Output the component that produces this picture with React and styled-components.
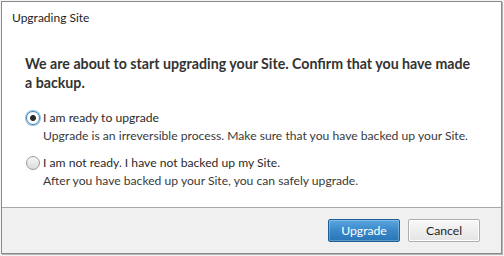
import styled, { createGlobalStyle } from "styled-components";

const GlobalStyle = createGlobalStyle`
  html, body {
    margin: 0;
    padding: 0;
    background: #f4f4f4;
  }
  * {
    box-sizing: border-box;
  }
`;

const Page = styled.div`
  width: 504px;
  height: 256px;
  padding: 1px 2px 2px 1px;
  background: #f4f4f4;
  font-family: Lato, "Noto Sans", sans-serif;
`;

const Dialog = styled.div`
  height: 100%;
  display: flex;
  flex-direction: column;
  background: #fff;
  border: 1px solid #8a8a8a;
  box-shadow: 1px 1px 0 #b5b5b5;
`;

const TitleBar = styled.div`
  height: 33px;
  padding: 8px 0 0 10px;
  font-size: 12px;
  color: #1e1e1e;
`;

const Content = styled.div`
  flex: 1;
  padding: 19px 24px 0 23px;
`;

const Heading = styled.h2`
  margin: 0 0 17px;
  font-size: 14.2px;
  line-height: 19px;
  font-weight: 700;
  color: #333;
`;

const Option = styled.label`
  display: grid;
  grid-template-columns: 17px 1fr;
  column-gap: 1px;
  margin-bottom: ${(p) => (p.$last ? "0" : "9px")};
  font-size: 12.15px;
  line-height: 18px;
  color: #2a2a2a;
`;

const Radio = styled.span`
  width: 14px;
  height: 14px;
  margin-top: 2px;
  margin-left: 1px;
  border-radius: 50%;
  border: 1px solid ${(p) => (p.$checked ? "#3c7fb1" : "#9a9a9a")};
  background: ${(p) =>
    p.$checked
      ? "radial-gradient(circle, #222 0, #333 2.6px, #fff 3.4px, #fff 100%)"
      : "linear-gradient(#f6f6f6, #dcdcdc)"};
  box-shadow: ${(p) => (p.$checked ? "0 0 0 1px #8fc0e6" : "none")};
`;

const Desc = styled.span`
  grid-column: 2;
  color: #3a3a3a;
`;

const Footer = styled.div`
  height: 46px;
  display: flex;
  justify-content: flex-end;
  align-items: center;
  gap: 8px;
  padding: 0 21px 1px 0;
  background: #f0f0f0;
  border-top: 1px solid #a8a8a8;
`;

const Button = styled.button`
  width: 72px;
  height: 23px;
  font-family: inherit;
  font-size: 12.2px;
  border-radius: 2px;
  padding: 0;
  color: ${(p) => (p.$primary ? "#fff" : "#1e1e1e")};
  border: 1px solid ${(p) => (p.$primary ? "#1f5f99" : "#adadad")};
  background: ${(p) =>
    p.$primary
      ? "linear-gradient(#5aa6e0, #3a88c8 50%, #2a76b8)"
      : "linear-gradient(#f8f8f8, #e4e4e4)"};
  box-shadow: ${(p) =>
    p.$primary ? "inset 0 0 0 1px rgba(255,255,255,0.25)" : "inset 0 0 0 1px #fff"};
`;

const App = () => {
  return (
    <>
      <GlobalStyle />
      <Page>
        <Dialog>
          <TitleBar>Upgrading Site</TitleBar>
          <Content>
            <Heading>
              We are about to start upgrading your Site. Confirm that you have
              made a backup.
            </Heading>
            <Option>
              <Radio $checked />
              <span>I am ready to upgrade</span>
              <Desc>
                Upgrade is an irreversible process. Make sure that you have
                backed up your Site.
              </Desc>
            </Option>
            <Option $last>
              <Radio />
              <span>I am not ready. I have not backed up my Site.</span>
              <Desc>After you have backed up your Site, you can safely upgrade.</Desc>
            </Option>
          </Content>
          <Footer>
            <Button $primary>Upgrade</Button>
            <Button>Cancel</Button>
          </Footer>
        </Dialog>
      </Page>
    </>
  );
};

export default App;
